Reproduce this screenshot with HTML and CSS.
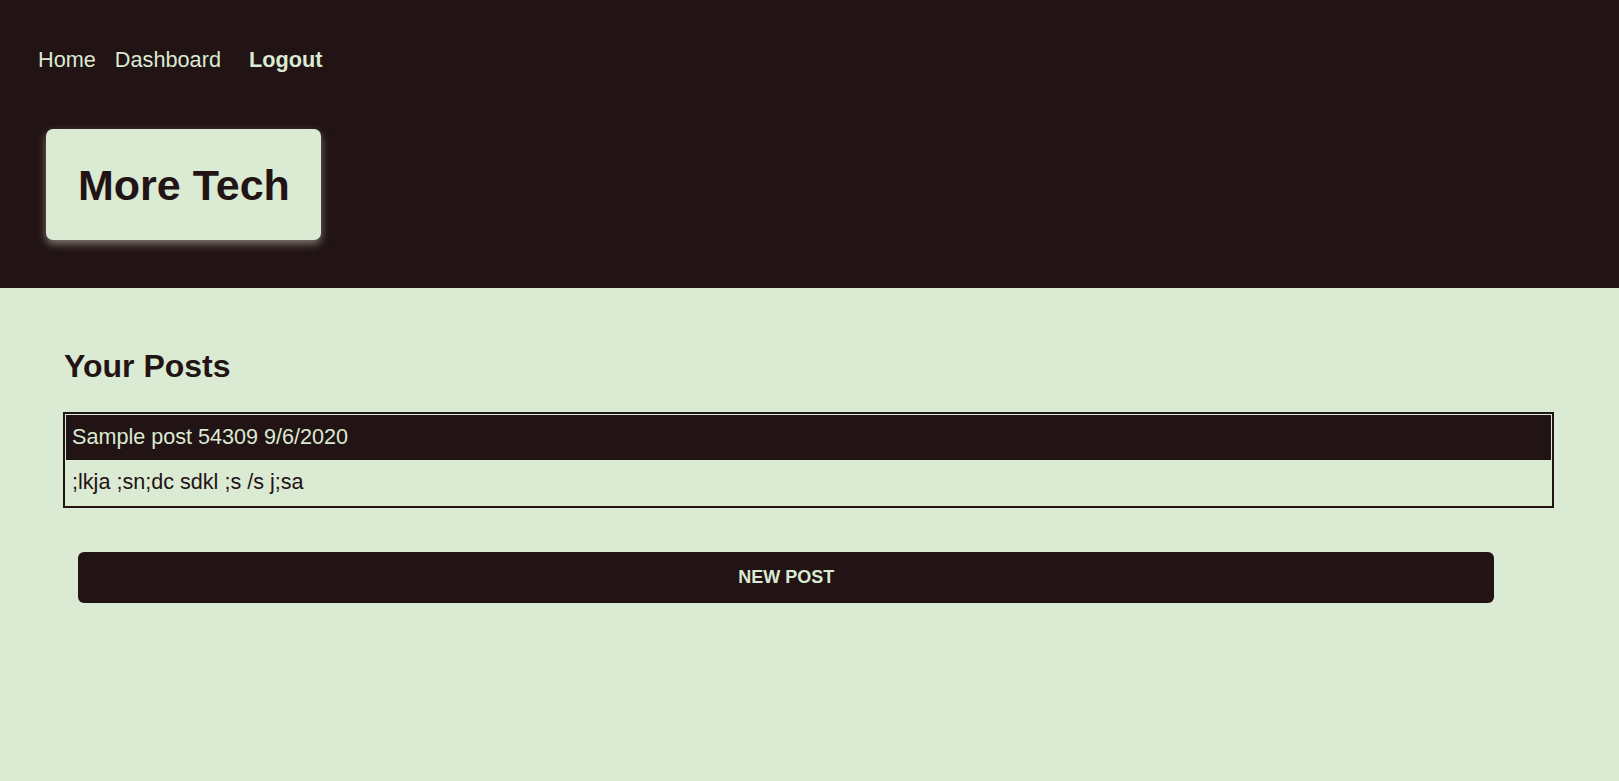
FILE: index.html
```html
<!DOCTYPE html>
<html lang="en">
<head>
<meta charset="utf-8">
<title>More Tech</title>
<link rel="stylesheet" href="styles.css">
</head>
<body>
<header class="site-header">
  <nav class="nav">
    <a class="nav-link nav-home" href="#">Home</a>
    <a class="nav-link nav-dash" href="#">Dashboard</a>
    <a class="nav-link nav-logout" href="#">Logout</a>
  </nav>
  <div class="brand">
    <h1 class="brand-title">More Tech</h1>
  </div>
</header>
<main class="content">
  <h2 class="section-title">Your Posts</h2>
  <article class="post-card">
    <div class="post-head">Sample post 54309 9/6/2020</div>
    <div class="post-body">;lkja ;sn;dc sdkl ;s /s j;sa</div>
  </article>
  <button class="new-post">NEW POST</button>
</main>
</body>
</html>
```

FILE: styles.css
```css
* { box-sizing: border-box; }

html, body {
  margin: 0;
  padding: 0;
  background: #dbead3;
  font-family: "Liberation Sans", Arial, sans-serif;
  color: #221314;
  min-height: 100%;
}

.site-header {
  background: #221314;
  height: 288px;
  padding: 48px 0 0 38px;
}

.nav {
  display: flex;
  align-items: baseline;
}

.nav-link {
  color: #dbead3;
  text-decoration: none;
  font-size: 21.7px;
  line-height: 24px;
}

.nav-home { margin-right: 19px; }
.nav-dash { margin-right: 28px; }
.nav-logout { font-weight: bold; }

.brand {
  display: inline-block;
  margin: 57px 0 0 8px;
  background: #dbead3;
  border-radius: 7px;
  padding: 32px 31px 31px 32px;
  box-shadow: 0 4px 8px rgba(215, 220, 205, 0.5);
}

.brand-title {
  margin: 0;
  font-size: 43px;
  line-height: 48px;
  font-weight: bold;
  color: #221314;
}

.content {
  padding: 60px 65px 0 63px;
}

.section-title {
  margin: 0 0 27px 1px;
  font-size: 32px;
  font-weight: bold;
  line-height: 37px;
}

.post-card {
  border: 2px solid #221314;
  padding: 1px 1px 0;
}

.post-head {
  background: #221314;
  color: #dbead3;
  font-size: 21.6px;
  line-height: 24px;
  padding: 10px 6px 11px;
}

.post-body {
  font-size: 21.6px;
  line-height: 24px;
  padding: 10px 6px 12px;
}

.new-post {
  display: flex;
  align-items: center;
  justify-content: center;
  width: 95%;
  height: 51px;
  margin: 44px 0 0 15px;
  background: #221314;
  color: #dbead3;
  border: none;
  border-radius: 6px;
  font-family: "Liberation Sans", Arial, sans-serif;
  font-size: 18px;
  font-weight: bold;
  cursor: pointer;
}
```
